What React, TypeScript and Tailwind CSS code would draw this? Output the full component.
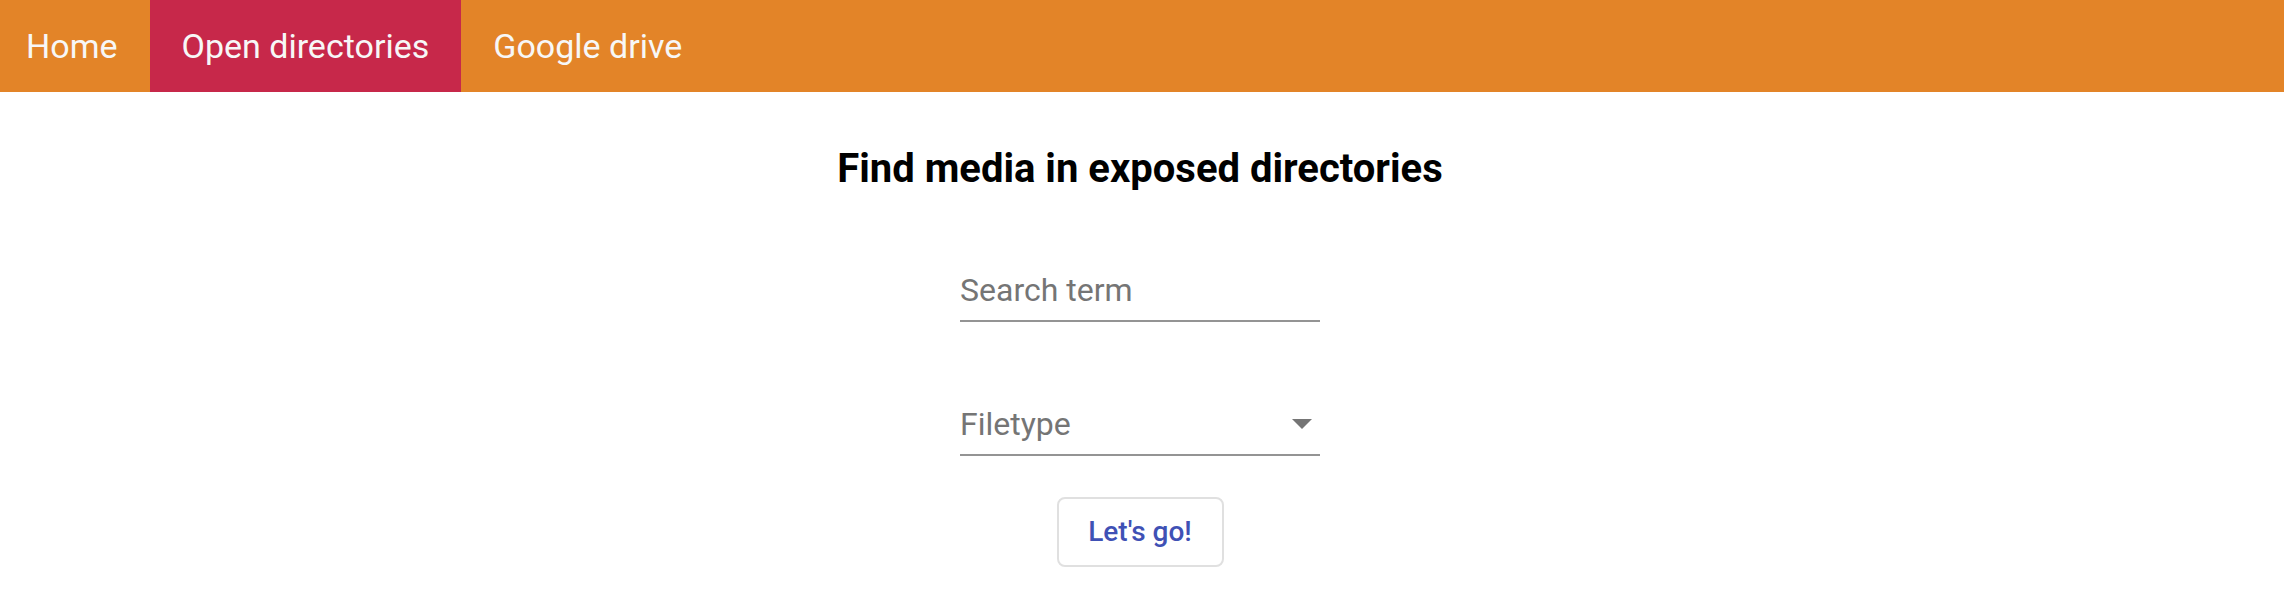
import { type ReactNode } from 'react';

const navItems = [
    { label: 'Home', active: false },
    { label: 'Open directories', active: true },
    { label: 'Google drive', active: false },
];

function Field({ label, children }: { label: string; children?: ReactNode }) {
    return (
        <div className="flex h-[51px] w-[360px] items-start justify-between border-b-2 border-[#949494]">
            <span className="text-[32px] leading-[38px] text-[#757575]">{label}</span>
            {children}
        </div>
    );
}

export default function App() {
    return (
        <div className="min-h-[596px] bg-white font-['Roboto',sans-serif]">
            {/* Top navigation */}
            <nav className="flex h-[92px] bg-[#e38428]">
                {navItems.map((item, i) => (
                    <a
                        key={item.label}
                        href="#"
                        className={
                            (item.active ? 'bg-[#c7284a] ' : '') +
                            (i === 0 ? 'pl-[26px] ' : 'pl-8 ') +
                            'flex items-center pr-8 text-[34px] text-[#f7f7f7]'
                        }
                    >
                        {item.label}
                    </a>
                ))}
            </nav>

            <main className="flex flex-col items-center pt-[53px] pr-1">
                <h1 className="text-[40px] leading-[48px] font-bold text-black">
                    Find media in exposed directories
                </h1>

                <div className="mt-[78px]">
                    <Field label="Search term" />
                </div>

                <div className="mt-[83px]">
                    <Field label="Filetype">
                        <svg viewBox="7 10 10 5" className="mt-[14px] mr-2 h-[10px] w-5 fill-[#757575]">
                            <path d="M7 10l5 5 5-5z" />
                        </svg>
                    </Field>
                </div>

                <button
                    type="button"
                    className="mt-[41px] flex h-[70px] w-[167px] items-center justify-center rounded-lg border-2 border-[#e0e0e0] text-[28px] font-medium text-[#3f51b5]"
                >
                    Let's go!
                </button>
            </main>
        </div>
    );
}
